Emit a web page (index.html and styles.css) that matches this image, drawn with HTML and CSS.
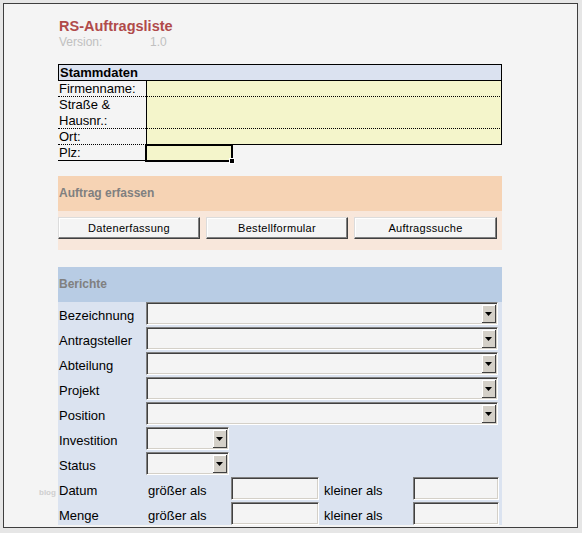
FILE: index.html
```html
<!DOCTYPE html>
<html lang="de">
<head>
  <meta charset="UTF-8">
  <meta name="viewport" content="width=device-width, initial-scale=1.0">
  <title>RS-Auftragsliste</title>
  <link rel="stylesheet" href="styles.css">
</head>
<body>

  <div class="frame">
    <div class="title">RS-Auftragsliste</div>
    <div class="version"><span class="version-label">Version:</span><span>1.0</span></div>

    <!-- Stammdaten -->
    <div class="stamm">
      <div class="stamm-head">Stammdaten</div>
      <div class="stamm-row">
        <div class="stamm-label">Firmenname:</div>
        <div class="stamm-value"></div>
      </div>
      <div class="stamm-row tall">
        <div class="stamm-label">Straße &amp;<br>Hausnr.:</div>
        <div class="stamm-value"></div>
      </div>
      <div class="stamm-row last">
        <div class="stamm-label">Ort:</div>
        <div class="stamm-value"></div>
      </div>
      <div class="stamm-row plz">
        <div class="stamm-label">Plz:</div>
        <div class="plz-cell"><span class="handle"></span></div>
      </div>
    </div>

    <!-- Auftrag erfassen -->
    <div class="auftrag">
      <div class="auftrag-head">Auftrag erfassen</div>
      <div class="auftrag-body">
        <button class="sheet-button first">Datenerfassung</button>
        <button class="sheet-button">Bestellformular</button>
        <button class="sheet-button wide">Auftragssuche</button>
      </div>
    </div>

    <!-- Berichte -->
    <div class="berichte">
      <div class="berichte-head">Berichte</div>
      <div class="berichte-body">
        <div class="row">
          <div class="row-label">Bezeichnung</div>
          <div class="combo"><span class="drop"><svg width="7" height="4" viewBox="0 0 7 4"><path d="M0 0H7L3.5 4Z" fill="#000"/></svg></span></div>
        </div>
        <div class="row">
          <div class="row-label">Antragsteller</div>
          <div class="combo"><span class="drop"><svg width="7" height="4" viewBox="0 0 7 4"><path d="M0 0H7L3.5 4Z" fill="#000"/></svg></span></div>
        </div>
        <div class="row">
          <div class="row-label">Abteilung</div>
          <div class="combo"><span class="drop"><svg width="7" height="4" viewBox="0 0 7 4"><path d="M0 0H7L3.5 4Z" fill="#000"/></svg></span></div>
        </div>
        <div class="row">
          <div class="row-label">Projekt</div>
          <div class="combo"><span class="drop"><svg width="7" height="4" viewBox="0 0 7 4"><path d="M0 0H7L3.5 4Z" fill="#000"/></svg></span></div>
        </div>
        <div class="row">
          <div class="row-label">Position</div>
          <div class="combo"><span class="drop"><svg width="7" height="4" viewBox="0 0 7 4"><path d="M0 0H7L3.5 4Z" fill="#000"/></svg></span></div>
        </div>
        <div class="row">
          <div class="row-label">Investition</div>
          <div class="combo small"><span class="drop"><svg width="7" height="4" viewBox="0 0 7 4"><path d="M0 0H7L3.5 4Z" fill="#000"/></svg></span></div>
        </div>
        <div class="row">
          <div class="row-label">Status</div>
          <div class="combo small"><span class="drop"><svg width="7" height="4" viewBox="0 0 7 4"><path d="M0 0H7L3.5 4Z" fill="#000"/></svg></span></div>
        </div>
        <div class="row range">
          <div class="row-label"><span class="blog">blog</span>Datum</div>
          <div class="row-text">größer als</div>
          <div class="field"></div>
          <div class="row-text right">kleiner als</div>
          <div class="field"></div>
        </div>
        <div class="row range">
          <div class="row-label">Menge</div>
          <div class="row-text">größer als</div>
          <div class="field"></div>
          <div class="row-text right">kleiner als</div>
          <div class="field"></div>
        </div>
      </div>
    </div>
  </div>

</body>
</html>
```

FILE: styles.css
```css
body {
  margin: 0;
  background: #e6e6e6;
  font-family: "Liberation Sans", Arial, sans-serif;
  color: #000;
}

.frame {
  margin: 3px 0 0 3px;
  width: 575px;
  height: 525px;
  box-sizing: border-box;
  border: 1px solid #3e3e3e;
  background: #f4f4f4;
  padding-left: 54px;
  overflow: hidden;
}

.title {
  margin-top: 14px;
  padding-left: 1px;
  font-size: 14.5px;
  line-height: 17px;
  font-weight: bold;
  color: #b04a4a;
}

.version {
  padding-left: 1px;
  font-size: 12px;
  line-height: 14px;
  color: #c0c0c0;
}

.version-label {
  display: inline-block;
  width: 91px;
}

/* Stammdaten */
.stamm {
  margin-top: 15px;
  width: 444px;
  font-size: 13px;
}

.stamm-head {
  height: 17px;
  box-sizing: border-box;
  border: 1px solid #000;
  background: #dbe2f0;
  font-weight: bold;
  line-height: 15px;
  padding-left: 1px;
}

.stamm-row {
  display: grid;
  grid-template-columns: 88px 356px;
}

.stamm-label {
  height: 16px;
  box-sizing: border-box;
  border-bottom: 1px dotted #000;
  line-height: 15px;
  padding-left: 1px;
  white-space: nowrap;
}

.stamm-value {
  background: #f4f5cb;
  border-left: 1px solid #000;
  border-right: 1px solid #000;
  border-bottom: 1px dotted #000;
}

.tall .stamm-label {
  height: 32px;
  line-height: 16px;
  padding-top: 0;
}

.last .stamm-value {
  border-bottom: 1px solid #000;
}

.plz .stamm-label {
  border-bottom: 1px solid #000;
}

.plz-cell {
  position: relative;
  width: 88px;
  height: 18px;
  margin: -1px 0 -1px -1px;
  box-sizing: border-box;
  border: 2px solid #000;
  background: #f4f5cb;
}

.handle {
  position: absolute;
  right: -4px;
  bottom: -4px;
  width: 4px;
  height: 4px;
  background: #000;
  border: 1px solid #fff;
}

/* Auftrag erfassen */
.auftrag {
  margin-top: 15px;
  width: 444px;
}

.auftrag-head,
.berichte-head {
  height: 35px;
  padding-left: 1px;
  font-size: 12px;
  line-height: 35px;
  font-weight: bold;
  color: #808080;
}

.auftrag-head {
  background: #f6d3b4;
}

.auftrag-body {
  display: flex;
  gap: 6px;
  padding: 6px 0 11px;
  background: #f8e7db;
}

.sheet-button {
  width: 142px;
  height: 22px;
  padding: 0;
  box-sizing: border-box;
  background: #f4f4f4;
  border: 1px solid;
  border-color: #dcdcdc #404040 #404040 #dcdcdc;
  box-shadow: inset -1px -1px 0 #808080, inset 1px 1px 0 #fff;
  font-family: "Liberation Sans", Arial, sans-serif;
  font-size: 11px;
  letter-spacing: 0.3px;
  color: #000;
}

.sheet-button.wide {
  width: 143px;
}

/* Berichte */
.berichte {
  margin-top: 17px;
  width: 444px;
}

.berichte-head {
  background: #b8cce4;
}

.berichte-body {
  background: #dbe3f0;
}

.row {
  display: grid;
  grid-template-columns: 88px 352px;
  height: 25px;
  font-size: 13px;
}

.row:last-child {
  height: 23px;
}

.row.range {
  grid-template-columns: 88px 85px 88px 94px 86px;
}

.row-label,
.row-text {
  line-height: 16px;
  padding-top: 6px;
  padding-left: 1px;
  white-space: nowrap;
}

.row-text {
  padding-left: 2px;
}

.row-text.right {
  padding-left: 5px;
}

.blog {
  display: inline-block;
  width: 20px;
  margin-left: -20px;
  font-size: 8px;
  font-weight: bold;
  color: #cfcfcf;
  vertical-align: top;
  margin-top: 2px;
}

.combo,
.field {
  height: 23px;
  box-sizing: border-box;
  background: #f4f4f4;
  border-top: 1px solid #808080;
  border-left: 1px solid #808080;
  border-right: 1px solid #fff;
  border-bottom: 1px solid #fff;
  box-shadow: inset 1px 1px 0 #404040, inset -1px -1px 0 #d4d0c8;
}

.combo {
  display: flex;
  justify-content: flex-end;
  padding: 2px 1px 1px 0;
}

.combo.small {
  width: 83px;
}

.drop {
  display: flex;
  align-items: center;
  justify-content: center;
  width: 14px;
  box-sizing: border-box;
  background: #d4d0c8;
  border-right: 1px solid #404040;
  border-bottom: 1px solid #404040;
  box-shadow: inset 1px 1px 0 #fff;
}
```
